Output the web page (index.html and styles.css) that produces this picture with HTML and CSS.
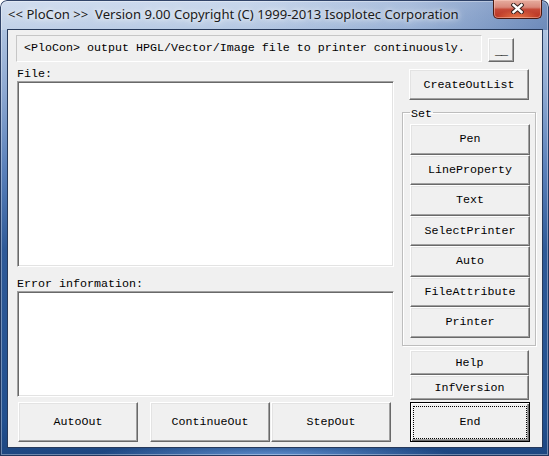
FILE: index.html
```html
<!DOCTYPE html>
<html>
<head>
<meta charset="utf-8">
<title>PloCon</title>
<link rel="stylesheet" href="styles.css">
</head>
<body>
<div class="window">
  <div class="titlebar">
    <span class="title">&lt;&lt; PloCon &gt;&gt;  Version 9.00 Copyright (C) 1999-2013 Isoplotec Corporation</span>
    <div class="close" aria-label="Close">
      <svg width="13" height="11" viewBox="0 0 13 11"><path d="M2.5 2 L10.5 9 M10.5 2 L2.5 9" stroke="#3b2420" stroke-width="4.4" stroke-linecap="square" fill="none"/><path d="M2.5 2 L10.5 9 M10.5 2 L2.5 9" stroke="#ffffff" stroke-width="2.4" stroke-linecap="square" fill="none"/></svg>
    </div>
  </div>
  <div class="client">
    <div class="top-row">
      <div class="message">&lt;PloCon&gt; output HPGL/Vector/Image file to printer continuously.</div>
      <button class="btn btn-min">__</button>
    </div>
    <div class="main">
      <div class="left">
        <div class="label">File:</div>
        <div class="listbox file-box"></div>
        <div class="label error-label">Error information:</div>
        <div class="listbox error-box"></div>
        <div class="bottom-row">
          <button class="btn btn-bottom btn-auto">AutoOut</button>
          <button class="btn btn-bottom btn-continue">ContinueOut</button>
          <button class="btn btn-bottom btn-step">StepOut</button>
        </div>
      </div>
      <div class="right">
        <button class="btn btn-create">CreateOutList</button>
        <fieldset class="group">
          <legend>Set</legend>
          <button class="btn btn-set">Pen</button>
          <button class="btn btn-set">LineProperty</button>
          <button class="btn btn-set">Text</button>
          <button class="btn btn-set">SelectPrinter</button>
          <button class="btn btn-set">Auto</button>
          <button class="btn btn-set">FileAttribute</button>
          <button class="btn btn-set">Printer</button>
        </fieldset>
        <button class="btn btn-small btn-help">Help</button>
        <button class="btn btn-small">InfVersion</button>
        <button class="btn btn-end">End</button>
      </div>
    </div>
  </div>
</div>
</body>
</html>
```
FILE: styles.css
```css
* { box-sizing: border-box; }
html, body { margin: 0; padding: 0; background: #ffffff; }

.window {
  width: 549px;
  height: 456px;
  padding: 0 6px 8px 7px;
  display: flex;
  flex-direction: column;
  border-radius: 7px 7px 0 0;
  background:
    linear-gradient(to right, rgba(255,255,255,0.25) 0%, rgba(255,255,255,0.1) 45%, rgba(40,80,150,0.15) 75%, rgba(30,70,140,0.45) 100%) 0 0 / 100% 30px no-repeat,
    radial-gradient(ellipse 180px 14px at 50% 100%, rgba(120,170,235,0.75), rgba(120,170,235,0) 100%),
    linear-gradient(to bottom, #c3d3ea 0px, #aec3e0 28px, #8ea9d2 90px, #5a80ba 170px, #2f5a98 250px, #22508f 420px, #1d4680 456px);
  box-shadow: inset 0 0 0 1px rgba(20,40,80,0.85), inset 0 0 0 2px rgba(255,255,255,0.35);
}

.titlebar {
  height: 29px;
  display: flex;
  align-items: flex-start;
}

.title {
  padding: 7px 0 0 1px;
  font: 13.1px/15px "Noto Sans", "Open Sans", sans-serif;
  color: #1a1a1a;
  white-space: pre;
  text-shadow: 0 0 8px rgba(255,255,255,0.95), 0 0 4px rgba(255,255,255,0.8);
}

.close {
  margin-left: auto;
  margin-right: 1px;
  width: 49px;
  height: 19px;
  border: 1px solid #4a1a12;
  border-top: none;
  border-radius: 0 0 5px 5px;
  display: flex;
  align-items: center;
  justify-content: center;
  background:
    radial-gradient(ellipse 22px 8px at 50% 100%, rgba(255,150,90,0.7), rgba(255,150,90,0)),
    linear-gradient(to bottom, #e6ad9f 0%, #d9887a 40%, #c54a38 52%, #b9321f 100%);
  box-shadow: inset 0 0 0 1px rgba(255,210,200,0.45);
}
.close svg { display: block; margin-top: -1px; }

.client {
  flex: 1;
  background: #f0f0f0;
  border: 1px solid #26395a;
  display: flex;
  flex-direction: column;
}

.btn, .label, .message, legend {
  font-family: "Liberation Mono", "Courier New", monospace;
  font-size: 11.67px;
  color: #000;
}

.top-row {
  display: flex;
  align-items: flex-end;
  margin: 5px 0 0 8px;
}

.message {
  width: 466px;
  height: 27px;
  line-height: 25px;
  padding-left: 7px;
  border: 1px solid;
  border-color: #c6c6c6 #ffffff #ffffff #c6c6c6;
  white-space: nowrap;
}

.btn {
  margin: 0;
  padding: 0;
  background: #f0f0f0;
  border: 1px solid;
  border-color: #ffffff #696969 #696969 #ffffff;
  box-shadow: inset -1px -1px 0 #a0a0a0, inset 1px 1px 0 #e3e3e3;
  display: flex;
  align-items: center;
  justify-content: center;
  line-height: 14px;
  white-space: nowrap;
}

.btn-min {
  margin-left: 6px;
  width: 26px;
  height: 24px;
  align-items: flex-start;
  padding-top: 6px;
  letter-spacing: -1px;
}

.main {
  display: flex;
  margin-top: 5px;
  padding-left: 9px;
}

.left {
  width: 377px;
  display: flex;
  flex-direction: column;
}

.label {
  height: 14px;
  line-height: 14px;
  white-space: nowrap;
}

.error-label { margin-top: 10px; }

.listbox {
  background: #ffffff;
  border: 1px solid;
  border-color: #a0a0a0 #ffffff #ffffff #a0a0a0;
  box-shadow: inset 1px 1px 0 #696969, inset -1px -1px 0 #e3e3e3;
}
.file-box { height: 186px; }
.error-box { height: 106px; }

.bottom-row {
  display: flex;
  margin-top: 5px;
}
.btn-bottom { width: 120px; height: 40px; }
.btn-auto { margin-left: 1px; }
.btn-continue { margin-left: 12px; }
.btn-step { margin-left: 1px; }

.right {
  margin-left: 8px;
  width: 134px;
  display: flex;
  flex-direction: column;
  align-items: flex-start;
}

.btn-create {
  margin: 2px 0 0 7px;
  width: 120px;
  height: 31px;
}

.group {
  margin: 3px 0 0;
  width: 134px;
  padding: 3px 5px 7px 7px;
  border: 1px solid #bdbdbd;
  box-shadow: inset 1px 1px 0 #ffffff, 1px 1px 0 #ffffff;
  min-inline-size: 0;
}
.group legend {
  padding: 4px 1px 0;
  line-height: 14px;
}

.btn-set {
  width: 120px;
  height: 30.5px;
}

.btn-small {
  margin-left: 8px;
  width: 119px;
  height: 25px;
}
.btn-help { margin-top: 4.5px; }

.btn-end {
  position: relative;
  margin: 2px 0 0 8px;
  width: 120px;
  height: 40px;
  border: 1px solid #000;
  box-shadow: inset 1px 1px 0 #ffffff, inset -1px -1px 0 #696969, inset -2px -2px 0 #a0a0a0;
}
.btn-end::after {
  content: "";
  position: absolute;
  top: 3px;
  left: 2px;
  right: 2px;
  bottom: 2px;
  border: 1px dotted #000;
}
```
